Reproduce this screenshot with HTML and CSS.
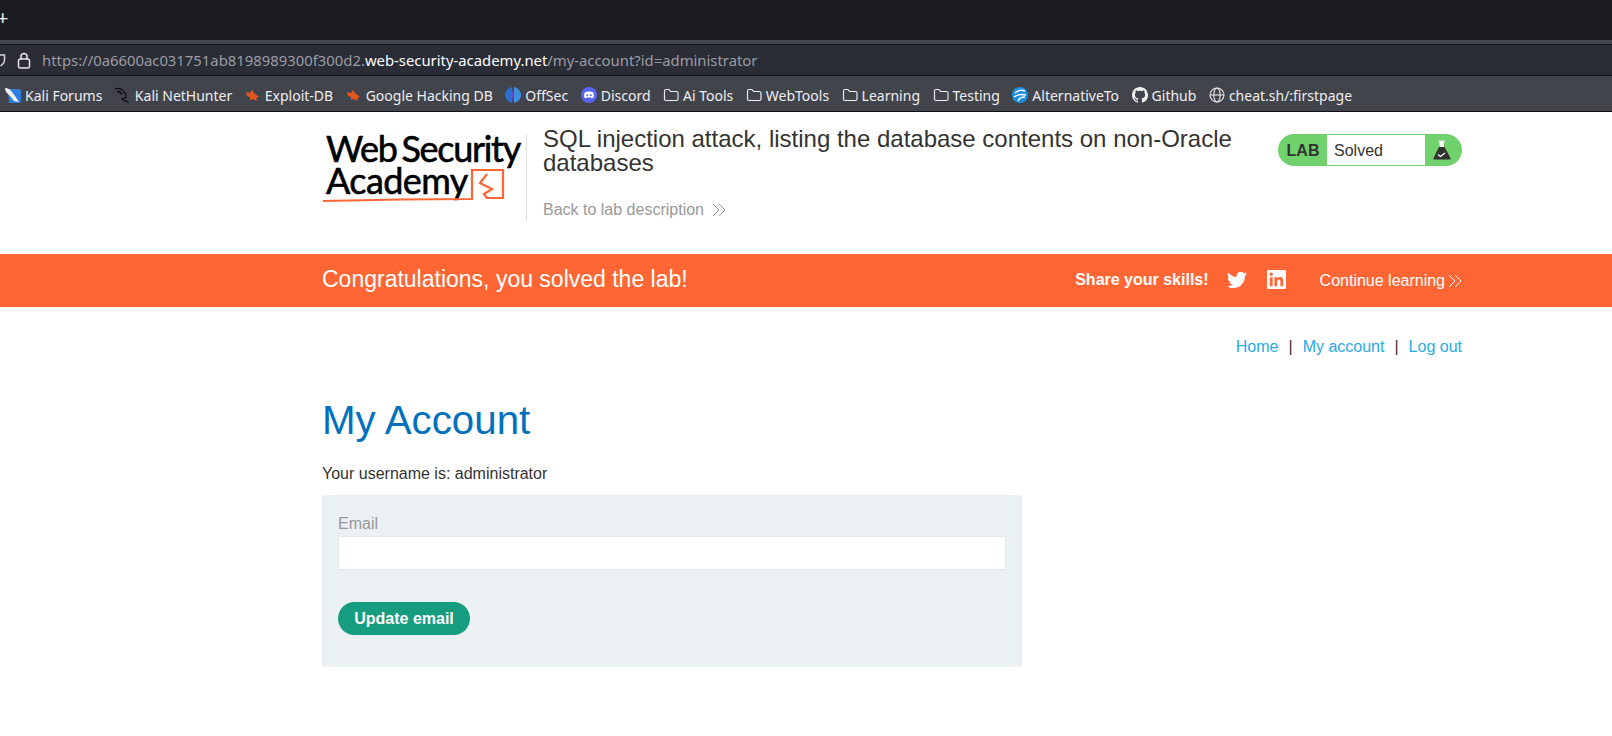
FILE: index.html
```html
<!DOCTYPE html>
<html lang="en">
<head>
  <meta charset="UTF-8" />
  <title>SQL injection attack, listing the database contents on non-Oracle databases</title>
  <link rel="stylesheet" href="styles.css">
</head>
<body>

  <div class="browser">
    <div class="tabbar">
      <span class="newtab">+</span>
    </div>
    <div class="urlbar">
      <svg class="shield" width="6" height="14" viewBox="0 0 6 14"><path d="M-4 2h8.500v5c0 3-2.500 5-4 6" fill="none" stroke="#d8d8dc" stroke-width="1.500"/></svg>
      <svg class="lock" width="14" height="17" viewBox="0 0 14 17"><rect x="1.500" y="7" width="11" height="9" rx="2" fill="none" stroke="#e6e6ea" stroke-width="1.500"/><path d="M4 7V4.500a3 3 0 0 1 6 0V7" fill="none" stroke="#e6e6ea" stroke-width="1.500"/></svg>
      <span class="url">https://0a6600ac031751ab8198989300f300d2.<b>web-security-academy.net</b>/my-account?id=administrator</span>
    </div>
    <div class="bookmarks">
      <a class="mark">
        <svg width="16" height="16" viewBox="0 0 16 16"><path d="M3 2h11c1 0 2 1 2 2v10c0 1-1 2-2 2H4z" fill="#2f7de0"/><path d="M0 1c3 0 5 1 7 4l3 4 4 6-5-1-3-4-4-4C1 5 0 3 0 1z" fill="#f2f2f4"/></svg>
        Kali Forums</a>
      <a class="mark">
        <svg width="16" height="16" viewBox="0 0 16 16" fill="none" stroke="#0c0c0e" stroke-width="1.300"><path d="M0 2c4-1.500 7 0 9 3 2 2 3 5 1 6-1 .5-3 0-3 1 1 2 5 1 7 4"/><path d="M2 4.500c2 0 4 1 5 3"/></svg>
        Kali NetHunter</a>
      <a class="mark">
        <svg width="16" height="16" viewBox="0 0 16 16"><path d="M1 5l4 1 2-3 2 3 5 4-3 1 1 3-4-2-3 1 0-3-3-1z" fill="#e2571e"/></svg>
        Exploit-DB</a>
      <a class="mark">
        <svg width="16" height="16" viewBox="0 0 16 16"><path d="M1 5l4 1 2-3 2 3 5 4-3 1 1 3-4-2-3 1 0-3-3-1z" fill="#e2571e"/></svg>
        Google Hacking DB</a>
      <a class="mark">
        <svg width="16" height="16" viewBox="0 0 16 16"><path d="M7 0C3 1 0 4 0 8s3 7 7 8z" fill="#2b6fd0"/><path d="M9 0c4 1 7 4 7 8s-3 7-7 8z" fill="#3f8fe0"/><path d="M8 1l1 7-1 8-1-8z" fill="#7a3fd0"/></svg>
        OffSec</a>
      <a class="mark">
        <svg width="16" height="16" viewBox="0 0 16 16"><circle cx="8" cy="8" r="8" fill="#5865f2"/><path d="M4 5.200c2.500-1 5.500-1 8 0 .8 1.800 1 3.500.9 5-1 .7-1.800 1-2.500 1.100l-.6-1c-1.200.3-2.400.3-3.600 0l-.6 1c-.7-.1-1.500-.4-2.500-1.100-.1-1.500.1-3.200.9-5z" fill="#fff"/><circle cx="6.200" cy="8.200" r="1" fill="#5865f2"/><circle cx="9.800" cy="8.200" r="1" fill="#5865f2"/></svg>
        Discord</a>
      <a class="mark"><svg class="folder" width="16" height="16" viewBox="0 0 16 16"><use href="#folder"/></svg>Ai Tools</a>
      <a class="mark"><svg class="folder" width="16" height="16" viewBox="0 0 16 16"><use href="#folder"/></svg>WebTools</a>
      <a class="mark"><svg class="folder" width="16" height="16" viewBox="0 0 16 16"><use href="#folder"/></svg>Learning</a>
      <a class="mark"><svg class="folder" width="16" height="16" viewBox="0 0 16 16"><use href="#folder"/></svg>Testing</a>
      <a class="mark">
        <svg width="16" height="16" viewBox="0 0 16 16"><circle cx="8" cy="8" r="8" fill="#1a8fe3"/><path d="M3 6c3-3 7-3 10-2M2 10c4-3 8-3 12-2M6 14c1-3 4-4 7-4" fill="none" stroke="#fff" stroke-width="1.500"/></svg>
        AlternativeTo</a>
      <a class="mark">
        <svg width="16" height="16" viewBox="0 0 16 16"><path fill="#f0f0f2" d="M8 0C3.580 0 0 3.580 0 8c0 3.540 2.290 6.530 5.470 7.590.4.070.55-.17.55-.38 0-.19-.01-.82-.01-1.490-2.010.37-2.530-.49-2.690-.94-.09-.23-.48-.94-.82-1.130-.28-.15-.68-.52-.01-.53.63-.01 1.080.58 1.230.82.72 1.210 1.870.87 2.330.66.07-.52.28-.87.51-1.070-1.780-.2-3.640-.89-3.640-3.950 0-.87.31-1.590.82-2.150-.08-.2-.36-1.020.08-2.120 0 0 .67-.21 2.200.82.64-.18 1.320-.27 2-.27.68 0 1.360.09 2 .27 1.530-1.040 2.200-.82 2.200-.82.44 1.100.16 1.920.08 2.120.51.56.82 1.270.82 2.150 0 3.070-1.870 3.750-3.650 3.950.29.25.54.73.54 1.480 0 1.070-.01 1.930-.01 2.200 0 .21.15.46.55.38A8.013 8.013 0 0 0 16 8c0-4.420-3.580-8-8-8z"/></svg>
        Github</a>
      <a class="mark">
        <svg width="16" height="16" viewBox="0 0 16 16" fill="none" stroke="#e6e6ea" stroke-width="1.100"><circle cx="8" cy="8" r="7"/><ellipse cx="8" cy="8" rx="3.200" ry="7"/><path d="M1 8h14"/></svg>
        cheat.sh/:firstpage</a>
    </div>
  </div>

  <svg class="defs" width="0" height="0">
    <symbol id="folder" viewBox="0 0 16 16"><path d="M1.500 4c0-1 .5-1.500 1.500-1.500h3l1.500 2h6c1 0 1.500.5 1.500 1.500v6c0 1-.5 1.500-1.500 1.500H3c-1 0-1.500-.5-1.500-1.500z" fill="none" stroke="#ececf0" stroke-width="1.200"/></symbol>
  </svg>

  <header class="lab-header">
    <div class="wrap lab-header-inner">
      <a class="logo">
        <span class="logo-line logo-web">Web Security</span>
        <span class="logo-line logo-academy">Academy</span>
        <svg class="logo-mark" width="204" height="50" viewBox="0 0 204 50" fill="none" stroke="#ff6633">
          <path d="M1 32c40-1 100-2 149-2V1h31v28h-17" stroke-width="2.200"/>
          <path d="M165 5l-7 9 12 6-8 5 3 4" stroke-width="2.200"/>
        </svg>
      </a>
      <div class="lab-title">
        <h2>SQL injection attack, listing the database contents on non-Oracle databases</h2>
        <a class="back">Back to lab description
          <svg width="14" height="14" viewBox="0 0 14 14" fill="none" stroke="#999" stroke-width="1"><path d="M1 1l6 6-6 6M7 1l6 6-6 6"/></svg>
        </a>
      </div>
      <div class="lab-status">
        <span class="lab-word">LAB</span>
        <span class="lab-solved">Solved</span>
        <span class="lab-icon">
          <svg width="18" height="20" viewBox="0 0 18 20"><path d="M6.500 6h4.500l6.500 12c.4 1-.2 1.500-1 1.500H1.500c-.8 0-1.400-.5-1-1.500z" fill="#333332"/><path d="M6.500 2h4.500v5H6.500z" fill="#fff"/><path d="M5.500 .5h6.500V2H5.500z" fill="#e8e8e8"/><path d="M5 14.500l2.500 2 4.500-3.500" fill="none" stroke="#fff" stroke-width="1.300"/></svg>
        </span>
      </div>
    </div>
  </header>

  <section class="solved-banner">
    <div class="wrap solved-inner">
      <h4>Congratulations, you solved the lab!</h4>
      <div class="share">
        <b>Share your skills!</b>
        <svg class="share-twitter" width="20" height="20" viewBox="0 0 24 24" fill="#fff"><path d="M23.953 4.570a10 10 0 0 1-2.825.775 4.958 4.958 0 0 0 2.163-2.723c-.951.555-2.005.959-3.127 1.184a4.920 4.920 0 0 0-8.384 4.482C7.690 8.095 4.067 6.130 1.640 3.162a4.822 4.822 0 0 0-.666 2.475c0 1.710.870 3.213 2.188 4.096a4.904 4.904 0 0 1-2.228-.616v.060a4.923 4.923 0 0 0 3.946 4.827 4.996 4.996 0 0 1-2.212.085 4.936 4.936 0 0 0 4.604 3.417 9.867 9.867 0 0 1-6.102 2.105c-.39 0-.779-.023-1.170-.067a13.995 13.995 0 0 0 7.557 2.209c9.053 0 13.998-7.496 13.998-13.985 0-.21 0-.42-.015-.63A9.935 9.935 0 0 0 24 4.590z"/></svg>
        <svg class="share-linkedin" width="19" height="19" viewBox="0 0 24 24" fill="#fff"><path d="M20.447 20.452h-3.554v-5.569c0-1.328-.027-3.037-1.852-3.037-1.853 0-2.136 1.445-2.136 2.939v5.667H9.351V9h3.414v1.561h.046c.477-.9 1.637-1.850 3.370-1.850 3.601 0 4.267 2.370 4.267 5.455v6.286zM5.337 7.433c-1.144 0-2.063-.926-2.063-2.065 0-1.138.920-2.063 2.063-2.063 1.140 0 2.064.925 2.064 2.063 0 1.139-.925 2.065-2.064 2.065zm1.782 13.019H3.555V9h3.564v11.452zM22.225 0H1.771C.792 0 0 .774 0 1.729v20.542C0 23.227.792 24 1.771 24h20.451C23.200 24 24 23.227 24 22.271V1.729C24 .774 23.200 0 22.222 0h.003z"/></svg>
      </div>
      <a class="continue">Continue learning
        <svg width="14" height="14" viewBox="0 0 14 14" fill="none" stroke="#fff" stroke-width="1"><path d="M1 1l6 6-6 6M7 1l6 6-6 6"/></svg>
      </a>
    </div>
  </section>

  <main class="wrap content">
    <nav class="top-links">
      <a>Home</a><span>|</span><a>My account</a><span>|</span><a>Log out</a>
    </nav>
    <h1>My Account</h1>
    <p class="username">Your username is: administrator</p>
    <form class="login-form">
      <label for="email">Email</label>
      <input type="email" id="email" name="email">
      <button type="button">Update email</button>
    </form>
  </main>

</body>
</html>
```

FILE: styles.css
```css
* {
  box-sizing: border-box;
}
html, body {
  height: 100%;
}
body {
  margin: 0;
  background: #fff;
  color: #333332;
  font-family: "Liberation Sans", Arial, sans-serif;
  font-size: 16px;
  overflow: hidden;
}
.defs {
  position: absolute;
}

/* browser chrome */
.browser {
  font-family: "Noto Sans", sans-serif;
}
.tabbar {
  height: 40px;
  background: #1c1d21;
  display: flex;
  align-items: center;
}
.newtab {
  color: #f0f0f2;
  font-size: 20px;
  line-height: 1;
  margin-left: -3px;
  margin-top: -4px;
}
.urlbar {
  height: 36px;
  background: #2a2c36;
  border-top: 4px solid #44464c;
  border-bottom: 1px solid #121316;
  box-shadow: inset 0 1px 0 #121316;
  display: flex;
  align-items: center;
  padding-top: 1px;
}
.shield {
  margin-right: 11px;
}
.lock {
  margin-right: 11px;
}
.url {
  color: #9b9ca3;
  font-size: 14.850px;
  white-space: nowrap;
}
.url b {
  color: #fff;
  font-weight: 400;
}
.bookmarks {
  height: 36px;
  background: #42444c;
  border-bottom: 1px solid #111;
  display: flex;
  align-items: center;
  gap: 12.500px;
  padding: 3px 0 0 5px;
}
.mark {
  display: flex;
  align-items: center;
  gap: 4px;
  color: #eeeef0;
  font-size: 14px;
  white-space: nowrap;
}

/* lab header */
.wrap {
  width: 1140px;
  margin-left: 322px;
}
.lab-header {
  height: 142px;
}
.lab-header-inner {
  display: flex;
  align-items: flex-start;
}
.logo {
  position: relative;
  display: block;
  width: 205px;
  height: 86px;
  margin-top: 22px;
  border-right: 1px solid #e0e0e0;
  color: #000;
  font-family: Lato, sans-serif;
  font-size: 36px;
  line-height: 32px;
  -webkit-text-stroke: 0.600px #000;
  padding-left: 4px;
  flex-shrink: 0;
}
.logo-line {
  display: block;
  white-space: nowrap;
}
.logo-web {
  margin-top: -2px;
  letter-spacing: -1.300px;
  word-spacing: -3px;
}
.logo-academy {
  letter-spacing: -0.600px;
}
.logo-mark {
  position: absolute;
  left: 0;
  top: 35px;
}
.lab-title {
  width: 720px;
  margin-left: 16px;
  margin-top: 15px;
}
.lab-title h2 {
  margin: 0;
  font-size: 24px;
  line-height: 24px;
  font-weight: 400;
  color: #333332;
}
.back {
  display: flex;
  align-items: center;
  gap: 8px;
  margin-top: 25px;
  color: #999;
  font-size: 16px;
  line-height: 20px;
}
.lab-status {
  margin-left: auto;
  margin-top: 22px;
  width: 184px;
  height: 32px;
  background: #70d16d;
  border-radius: 16px;
  display: flex;
  align-items: stretch;
  overflow: hidden;
}
.lab-word {
  width: 49px;
  text-align: center;
  font-weight: 700;
  line-height: 34px;
  padding-left: 1px;
}
.lab-solved {
  width: 98px;
  margin: 1px 0;
  background: #fff;
  line-height: 32px;
  padding-left: 7px;
}
.lab-icon {
  flex: 1;
  display: flex;
  align-items: center;
  justify-content: center;
  padding-right: 3px;
}

/* solved banner */
.solved-banner {
  height: 53px;
  background: #ff6633;
  color: #fff;
}
.solved-inner {
  height: 100%;
  display: flex;
  align-items: center;
}
.solved-inner h4 {
  margin: 0 0 2px;
  font-size: 23px;
  font-weight: 400;
}
.share {
  margin-left: auto;
  margin-bottom: 2px;
  display: flex;
  align-items: center;
}
.share-twitter {
  margin-left: 18px;
}
.share-linkedin {
  margin-left: 20px;
}
.continue {
  display: flex;
  align-items: center;
  gap: 3px;
  margin-left: 34px;
}

/* content */
.content {
  padding-top: 30px;
}
.top-links {
  display: flex;
  justify-content: flex-end;
  gap: 10px;
  line-height: 20px;
}
.top-links a {
  color: #29ace5;
}
h1 {
  margin: 37px 0 0;
  color: #0071bc;
  font-size: 40.300px;
  font-weight: 400;
  line-height: 54px;
}
.username {
  margin: 16px 0 0;
  line-height: 20px;
}
.login-form {
  width: 700px;
  height: 172px;
  margin-top: 11px;
  padding: 19px 16px;
  background: #ebf0f2;
}
.login-form label {
  display: block;
  color: #999;
  line-height: 20px;
  margin-bottom: 2px;
}
.login-form input {
  display: block;
  width: 100%;
  height: 34px;
  border: 1px solid #e3e8ea;
  background: #fff;
  padding: 0 8px;
  margin: 0;
}
.login-form button {
  display: block;
  margin-top: 32px;
  width: 132px;
  height: 33px;
  border: none;
  border-radius: 17px;
  background: #169c7f;
  color: #fff;
  font-family: inherit;
  font-size: 16px;
  font-weight: 700;
  padding: 0;
}
```
